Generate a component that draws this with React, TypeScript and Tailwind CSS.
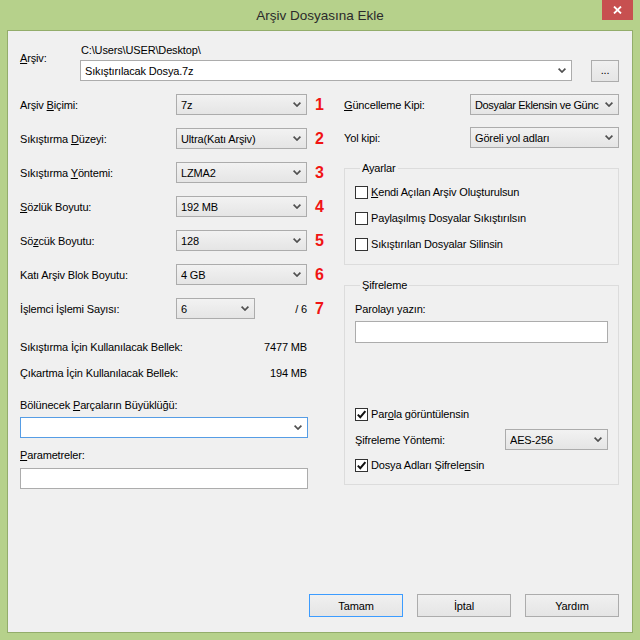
import React from 'react';

// small "v" arrow used by every drop-down
const Chevron = () => (
  <svg width="8" height="5" viewBox="0 0 8 5" className="shrink-0">
    <path d="M0.6 0.6 L4 4 L7.4 0.6" fill="none" stroke="#505050" strokeWidth="1.7" />
  </svg>
);

interface ComboProps {
  value?: string;
  className?: string;
  white?: boolean;
  focus?: boolean;
  tight?: boolean;
}

const Combo: React.FC<ComboProps> = ({ value = '', className = '', white, focus, tight }) => (
  <div
    className={`flex h-[21px] items-center border pl-[4px] pr-[5px] ${focus ? 'border-[#569de5]' : 'border-[#acacac]'} ${white ? 'bg-white' : 'bg-linear-to-b from-[#f2f2f2] to-[#e5e5e5]'} ${className}`}
  >
    <span className={`flex-1 overflow-hidden whitespace-nowrap ${tight ? 'tracking-[-0.35px]' : ''}`}>{value}</span>
    <Chevron />
  </div>
);

const Check: React.FC<{ checked?: boolean; children: React.ReactNode }> = ({ checked, children }) => (
  <div className="flex h-[16px] items-center">
    <span className="flex h-[13px] w-[13px] shrink-0 items-center justify-center border border-[#333333] bg-white">
      {checked && (
        <svg width="11" height="11" viewBox="0 0 11 11">
          <path d="M1.8 5.6 L4.3 8.2 L9.4 2.2" fill="none" stroke="#111" strokeWidth="2" />
        </svg>
      )}
    </span>
    <span className="ml-[3px]">{children}</span>
  </div>
);

const Num: React.FC<{ n: number }> = ({ n }) => (
  <span className="ml-[8px] font-['Liberation_Sans',sans-serif] text-[16px] font-bold leading-none tracking-normal text-[#f01414]">
    {n}
  </span>
);

const Btn: React.FC<{ children: React.ReactNode; primary?: boolean }> = ({ children, primary }) => (
  <button
    className={`flex h-[23px] w-[94px] items-center justify-center border bg-linear-to-b from-[#f0f0f0] to-[#e5e5e5] ${primary ? 'border-[#3c9cff]' : 'border-[#acacac]'}`}
  >
    {children}
  </button>
);

const leftRows: { label: React.ReactNode; value: string }[] = [
  { label: <>Arşiv <u>B</u>içimi:</>, value: '7z' },
  { label: <>Sıkıştırma <u>D</u>üzeyi:</>, value: 'Ultra(Katı Arşiv)' },
  { label: <>Sıkıştırma <u>Y</u>öntemi:</>, value: 'LZMA2' },
  { label: <><u>S</u>özlük Boyutu:</>, value: '192 MB' },
  { label: <>Sö<u>z</u>cük Boyutu:</>, value: '128' },
  { label: <>Katı Arşiv Blok Boyutu:</>, value: '4 GB' },
];

export default function App() {
  return (
    <div className="flex h-[640px] w-[640px] flex-col bg-[#b6d18b] px-[7px] pb-[7px] font-['Liberation_Sans',Arial,sans-serif] text-[11px] leading-[14px] tracking-[-0.15px] text-black">
      {/* title bar */}
      <div className="relative flex h-[30px] shrink-0 items-center justify-center pt-[2px] text-[13.5px] tracking-normal text-[#2b2b2b]">
        Arşiv Dosyasına Ekle
        <div className="absolute right-0 top-0 flex h-[20px] w-[31px] items-center justify-center bg-[#c75050]">
          <svg width="9" height="8" viewBox="0 0 9 8">
            <path d="M1 0.5 L8 7.5 M8 0.5 L1 7.5" stroke="#fff" strokeWidth="1.8" />
          </svg>
        </div>
      </div>

      <div className="flex flex-1 flex-col border border-[#93ad6b] bg-[#f0f0f0] pl-[12px] pr-[13px]">
        {/* archive path */}
        <div className="flex pt-[12px]">
          <div className="w-[60px] pt-[8px]">
            <u>A</u>rşiv:
          </div>
          <div className="flex flex-1 flex-col">
            <div className="h-[14px] pl-[1px]">C:\Users\USER\Desktop\</div>
            <Combo white className="mt-[3px]" value="Sıkıştırılacak Dosya.7z" />
          </div>
          <button className="ml-[19px] mt-[17px] flex h-[22px] w-[28px] items-end justify-center border border-[#acacac] bg-linear-to-b from-[#f0f0f0] to-[#e5e5e5] pb-[4px]">
            ...
          </button>
        </div>

        <div className="mt-[12px] flex">
          {/* left column */}
          <div className="flex w-[305px] flex-col">
            <div className="flex flex-col gap-[13px]">
              {leftRows.map((r, i) => (
                <div key={i} className="flex h-[21px] items-center">
                  <div className="w-[156px]">{r.label}</div>
                  <Combo className="w-[131px]" value={r.value} />
                  <Num n={i + 1} />
                </div>
              ))}
              <div className="flex h-[21px] items-center">
                <div className="w-[156px]">İşlemci İşlemi Sayısı:</div>
                <Combo className="w-[79px]" value="6" />
                <span className="w-[52px] text-right">/ 6</span>
                <Num n={7} />
              </div>
            </div>

            <div className="mt-[21px] flex w-[287px] justify-between">
              <span>Sıkıştırma İçin Kullanılacak Bellek:</span>
              <span>7477 MB</span>
            </div>
            <div className="mt-[12px] flex w-[287px] justify-between">
              <span>Çıkartma İçin Kullanılacak Bellek:</span>
              <span>194 MB</span>
            </div>

            <div className="mt-[18px]">
              Bölünecek <u>P</u>arçaların Büyüklüğü:
            </div>
            <Combo white focus className="mt-[5px] w-[288px]" />

            <div className="mt-[10px]">
              <u>P</u>arametreler:
            </div>
            <div className="mt-[6px] h-[21px] w-[288px] border border-[#acacac] bg-white" />
          </div>

          {/* right column */}
          <div className="ml-[19px] flex flex-1 flex-col">
            <div className="flex h-[21px] items-center">
              <div className="w-[126px]">
                <u>G</u>üncelleme Kipi:
              </div>
              <Combo tight className="w-[149px]" value="Dosyalar Eklensin ve Günc" />
            </div>
            <div className="mt-[12px] flex h-[21px] items-center">
              <div className="w-[126px]">Yol kipi:</div>
              <Combo className="w-[149px]" value="Göreli yol adları" />
            </div>

            <fieldset className="mt-[13px] border border-[#dcdcdc] pb-[12px] pl-[10px]">
              <legend className="ml-[5px] px-[2px]">Ayarlar</legend>
              <div className="flex flex-col gap-[10px] pt-[9px]">
                <Check>
                  <u>K</u>endi Açılan Arşiv Oluşturulsun
                </Check>
                <Check>Paylaşılmış Dosyalar Sıkıştırılsın</Check>
                <Check>Sıkıştırılan Dosyalar Silinsin</Check>
              </div>
            </fieldset>

            <fieldset className="mt-[13px] border border-[#dcdcdc] pb-[11px] pl-[10px] pr-[10px]">
              <legend className="ml-[5px] px-[2px]">Şifreleme</legend>
              <div className="pt-[10px]">Parolayı yazın:</div>
              <div className="mt-[5px] h-[22px] border border-[#acacac] bg-white" />
              <div className="mt-[63px]">
                <Check checked>
                  Par<u>o</u>la görüntülensin
                </Check>
              </div>
              <div className="mt-[7px] flex h-[21px] items-center">
                <div className="w-[150px]">Şifreleme Yöntemi:</div>
                <Combo className="flex-1" value="AES-256" />
              </div>
              <div className="mt-[7px]">
                <Check checked>
                  Dosya Adları Şifrele<u>n</u>sin
                </Check>
              </div>
            </fieldset>
          </div>
        </div>

        {/* dialog buttons */}
        <div className="mt-auto flex justify-end gap-[14px] pb-[15px]">
          <Btn primary>Tamam</Btn>
          <Btn>İptal</Btn>
          <Btn>Yardım</Btn>
        </div>
      </div>
    </div>
  );
}
